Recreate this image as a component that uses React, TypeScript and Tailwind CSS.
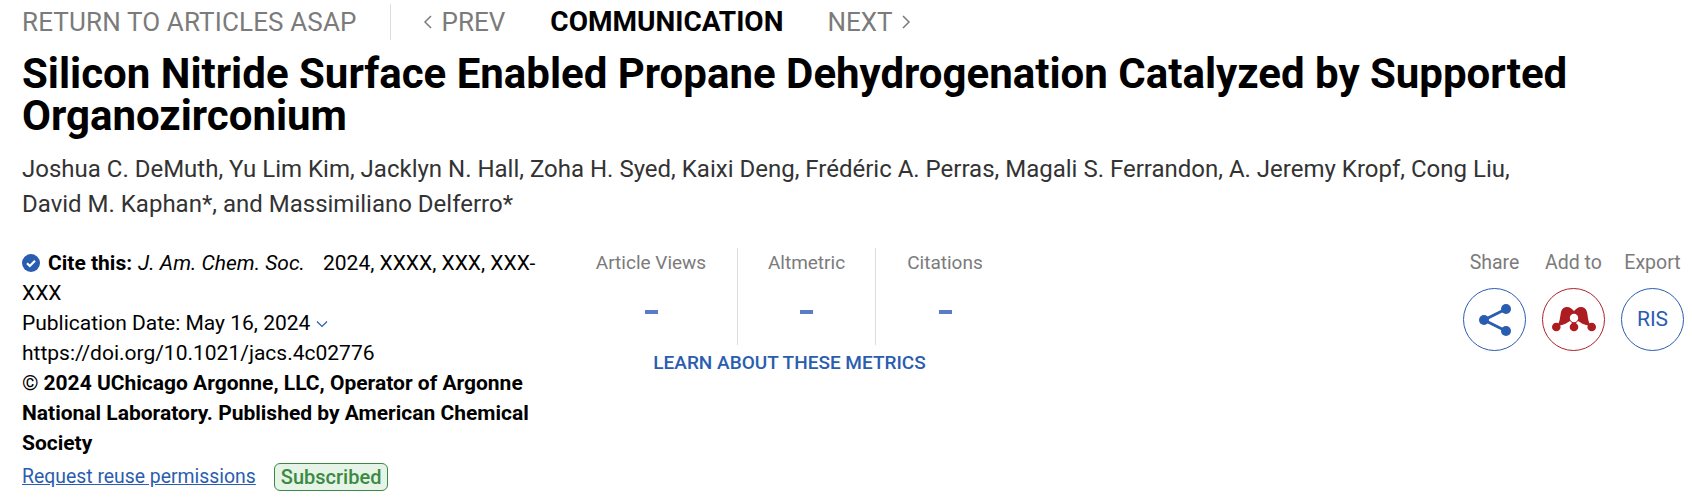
import React from "react";

function Divider() {
  return <div className="w-px self-stretch bg-[#dcdcdc]"></div>;
}

function Metric({ label, width }: { label: string; width: string }) {
  return (
    <div className={`flex flex-col items-center ${width}`}>
      <span className="text-[19px] leading-[30px] text-[#7b7b7b]">{label}</span>
      <div className="mt-[32px] h-[4px] w-[13px] bg-[#5a7cc6]"></div>
    </div>
  );
}

function ActionCircle({ label, color, children }: { label: string; color: string; children: React.ReactNode }) {
  return (
    <div className="flex w-[63px] flex-col items-center">
      <span className="whitespace-nowrap text-[19.5px] leading-[30px] text-[#7b7b7b]">{label}</span>
      <div className={`mt-[10px] flex h-[63px] w-[63px] items-center justify-center rounded-full border ${color}`}>
        {children}
      </div>
    </div>
  );
}

export default function App() {
  return (
    <div className="h-[497px] w-[1692px] overflow-hidden bg-white pl-[22px] font-['Roboto',sans-serif] text-black">
      <div className="flex h-[44px] items-center text-[26px] leading-[38px] text-[#7b7b7b]">
        <span className="tracking-[0.14px]">RETURN TO ARTICLES ASAP</span>
        <div className="ml-[33px] h-[36px] w-px bg-[#dcdcdc]"></div>
        <svg className="ml-[32px] h-[16px] w-[10px]" viewBox="0 0 10 16" fill="none" stroke="#7b7b7b" strokeWidth="1.5">
          <path d="M8 2 2 8l6 6" />
        </svg>
        <span className="ml-[9px]">PREV</span>
        <span className="ml-[45px] text-[28px] font-bold text-black">COMMUNICATION</span>
        <span className="ml-[44px]">NEXT</span>
        <svg className="ml-[8px] h-[16px] w-[10px]" viewBox="0 0 10 16" fill="none" stroke="#7b7b7b" strokeWidth="1.5">
          <path d="M2 2l6 6-6 6" />
        </svg>
      </div>

      <h1 className="mt-[9px] w-[1620px] text-[42px] font-bold leading-[42px] text-black">
        Silicon Nitride Surface Enabled Propane Dehydrogenation Catalyzed by Supported Organozirconium
      </h1>

      <p className="mt-[15px] w-[1520px] text-[24px] leading-[35px] text-[#333]">
        Joshua C. DeMuth, Yu Lim Kim, Jacklyn N. Hall, Zoha H. Syed, Kaixi Deng, Frédéric A. Perras, Magali S.
        Ferrandon, A. Jeremy Kropf, Cong Liu, David M. Kaphan*, and Massimiliano Delferro*
      </p>

      <div className="mt-[26px] flex">
        <div className="w-[520px] text-[21px] leading-[30px] text-black">
          <div>
            <svg className="mr-[8px] inline-block h-[18px] w-[18px] align-[-2px]" viewBox="0 0 18 18">
              <circle cx="9" cy="9" r="9" fill="#2a5db0" />
              <path d="M5 9.2l2.8 2.8L13 6.8" fill="none" stroke="#fff" strokeWidth="2.2" />
            </svg>
            <b className="mr-[6px] font-bold">Cite this:</b>
            <i className="mr-[18px]">J. Am. Chem. Soc.</i>
            2024, XXXX, XXX, XXX-XXX
          </div>
          <div>
            Publication Date: May 16, 2024
            <svg className="ml-[6px] inline-block h-[8px] w-[12px] align-[2px]" viewBox="0 0 12 8" fill="none" stroke="#2a5db0" strokeWidth="1.2">
              <path d="M1 1.500l5 5 5-5" />
            </svg>
          </div>
          <div>https://doi.org/10.1021/jacs.4c02776</div>
          <div className="font-bold">
            <span className="mr-[5px] font-normal">©</span>
            2024 UChicago Argonne, LLC, Operator of Argonne National Laboratory. Published by American Chemical Society
          </div>
          <div className="mt-[4px] flex items-center">
            <a className="text-[19.4px] text-[#2a5db0] underline">Request reuse permissions</a>
            <span className="ml-[18px] rounded-[6px] border border-[#3a8a43] bg-[#e6f3e7] px-[6px] text-[20px] font-medium leading-[26px] text-[#3a8a43]">
              Subscribed
            </span>
          </div>
        </div>

        <div className="ml-[23px] flex w-[449px] flex-col items-center">
          <div className="flex h-[97px]">
            <Metric label="Article Views" width="w-[172px]" />
            <Divider />
            <Metric label="Altmetric" width="w-[137px]" />
            <Divider />
            <Metric label="Citations" width="w-[138px]" />
          </div>
          <a className="mt-[3px] text-[19px] font-medium leading-[30px] text-[#2a5db0]">LEARN ABOUT THESE METRICS</a>
        </div>

        <div className="ml-auto mr-[8px] flex gap-[16px]">
          <ActionCircle label="Share" color="border-[#2a5db0]">
            <svg className="h-[34px] w-[32px]" viewBox="0 0 32 34" fill="#2a5db0">
              <circle cx="5" cy="17" r="5" />
              <circle cx="27" cy="6" r="5" />
              <circle cx="27" cy="28" r="5" />
              <path d="M5 17 27 6M5 17l22 11" stroke="#2a5db0" strokeWidth="3" />
            </svg>
          </ActionCircle>
          <ActionCircle label="Add to" color="border-[#b0212a]">
            <svg className="h-[25px] w-[44px]" viewBox="0 0 44 25" fill="#ad1c21">
              <path d="M5 19C8 15 8 10 9 5 10 1 13 0 15 0 18 0 20 2 22 4 24 2 26 0 29 0 31 0 34 1 35 5 36 10 36 15 39 19L34 18C31 17 29 16 26 14L24 16V20H20V16L18 14C15 16 13 17 10 18Z" />
              <circle cx="22" cy="11" r="4.200" fill="#fff" />
              <circle cx="4.300" cy="20" r="4.300" />
              <circle cx="22" cy="20" r="4.300" />
              <circle cx="39.700" cy="20" r="4.300" />
            </svg>
          </ActionCircle>
          <ActionCircle label="Export" color="border-[#2a5db0]">
            <span className="text-[21px] text-[#2a5db0]">RIS</span>
          </ActionCircle>
        </div>
      </div>
    </div>
  );
}
